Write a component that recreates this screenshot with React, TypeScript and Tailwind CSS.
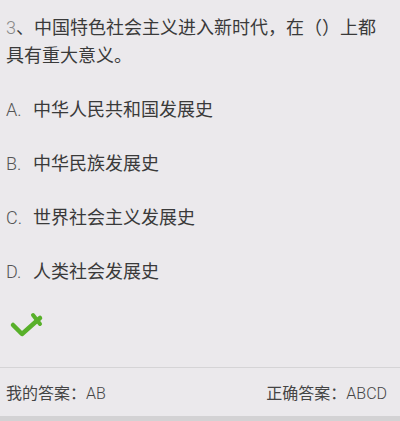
const options = [
  { key: "A", text: "中华人民共和国发展史" },
  { key: "B", text: "中华民族发展史" },
  { key: "C", text: "世界社会主义发展史" },
  { key: "D", text: "人类社会发展史" },
];

const latin = { fontFamily: 'Roboto, "Noto Sans", sans-serif' };

const CheckMark = () => (
  <svg width="40" height="32" viewBox="0 0 40 32">
    <polyline
      points="7,14 16,23 34,7"
      fill="none"
      stroke="#58b02a"
      strokeWidth="4.5"
      strokeLinecap="round"
      strokeLinejoin="round"
    />
    <line x1="27" y1="4" x2="34" y2="13" stroke="#58b02a" strokeWidth="4" strokeLinecap="round" />
  </svg>
);

export default function App() {
  return (
    <div
      className="w-[400px] h-[421px] bg-[#ebe9ec] text-[#3a3a3a] flex flex-col overflow-hidden"
      style={{ fontFamily: '"Noto Sans CJK SC", "Noto Sans", sans-serif' }}
    >
      <div className="flex-1 flex flex-col pl-[6px] pr-[10px] pt-[12px]">
        <p className="text-[18px] leading-[28px]">
          <span className="text-[#888] font-light leading-none" style={latin}>3</span>、中国特色社会主义进入新时代，在（）上都具有重大意义。
        </p>
        <ul className="mt-[26px] flex flex-col gap-[26px]">
          {options.map((o) => (
            <li key={o.key} className="text-[18px] leading-[28px] h-[28px]">
              <span className="inline-block w-[27px] text-[#555] font-light leading-none" style={latin}>
                {o.key}.
              </span>
              {o.text}
            </li>
          ))}
        </ul>
        <div className="mt-[27px]">
          <CheckMark />
        </div>
      </div>
      <div className="border-t border-[#d5d4d6] h-[49px] flex items-center justify-between px-[6px] text-[16px] leading-[24px] text-[#444]">
        <span>
          我的答案：<span className="font-light leading-none" style={latin}>AB</span>
        </span>
        <span className="pr-[7px]">
          正确答案：<span className="font-light leading-none" style={latin}>ABCD</span>
        </span>
      </div>
      <div className="h-[5px] bg-[#d3d2d4]" />
    </div>
  );
}
